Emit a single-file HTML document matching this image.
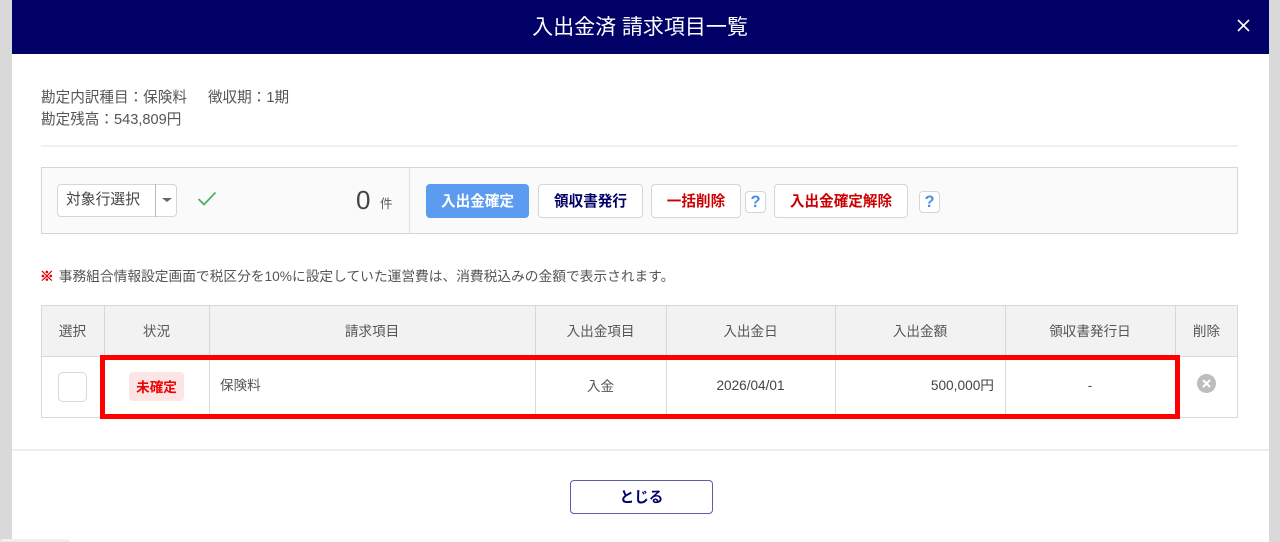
<!DOCTYPE html>
<html lang="ja"><head><meta charset="utf-8"><title>入出金済 請求項目一覧</title>
<style>
html,body{margin:0;padding:0;width:1280px;height:542px;overflow:hidden;background:#d9d9d9}
body{position:relative;font-family:"Liberation Sans","Noto Sans CJK JP",sans-serif;color:#555;font-size:14px}
.a{position:absolute;box-sizing:border-box;white-space:nowrap}
.c{display:flex;align-items:center;justify-content:center}
.btn{top:184px;height:34px;background:#fff;border:1px solid #d5d5d5;border-radius:4px;font-weight:700;font-size:14.6px}
.q{top:191px;height:22px;width:21px;background:#fff;border:1px solid #d5d5d5;border-radius:4px;color:#4a90e2;font-weight:700;font-size:16.5px}
.h{top:304px;height:51px;font-size:13.6px;color:#555}
.d{top:356px;height:58px;font-size:13.6px;color:#555}
.v{width:1px;background:#d8d8d8;top:305px;height:113px}
</style></head><body>
<div class="a" style="left:11.5px;top:0;width:1257px;height:542px;background:#fff"></div>
<div class="a c" style="left:11.5px;top:0;width:1257px;height:54px;background:#000066;color:#fff;font-size:21px;padding-bottom:2px">入出金済 請求項目一覧</div>
<svg class="a" style="left:1237px;top:19px" width="13" height="13" viewBox="0 0 13 13"><path d="M1 1L12 12M12 1L1 12" stroke="#fff" stroke-width="1.6"/></svg>

<div class="a" style="left:41px;top:87px;font-size:14.6px;line-height:22px;color:#555">勘定内訳種目：保険料<span style="margin-left:21px">徴収期：1期</span><br>勘定残高：543,809円</div>
<div class="a" style="left:41px;top:145px;width:1197px;height:2px;background:#f0f0f0"></div>

<div class="a" style="left:41px;top:167px;width:1197px;height:67px;background:#fafafa;border:1px solid #d5d5d5"></div>
<div class="a" style="left:409px;top:168px;width:1px;height:65px;background:#e2e2e2"></div>
<div class="a" style="left:57px;top:184px;width:120px;height:33px;background:#fff;border:1px solid #d5d5d5;border-radius:4px"></div>
<div class="a" style="left:155px;top:184px;width:1px;height:33px;background:#bbb"></div>
<div class="a" style="left:66px;top:185px;height:31px;line-height:31px;font-size:14.8px;color:#444">対象行選択</div>
<div class="a" style="left:162px;top:198px;width:0;height:0;border-left:5px solid transparent;border-right:5px solid transparent;border-top:4px solid #666"></div>
<svg class="a" style="left:197px;top:191px" width="20" height="16" viewBox="0 0 20 16"><path d="M1.5 8L7 13.5L18.5 1.5" fill="none" stroke="#4cae63" stroke-width="1.7"/></svg>
<div class="a" style="left:356px;top:184px;font-size:26px;line-height:32px;color:#444">0</div>
<div class="a" style="left:380px;top:195px;font-size:12.5px;line-height:18px;color:#555">件</div>

<div class="a btn c" style="left:426px;width:103px;background:#5b9bf0;border-color:#5b9bf0;color:#fff;padding-bottom:2px">入出金確定</div>
<div class="a btn c" style="left:538px;width:105px;color:#000066;padding-bottom:2px">領収書発行</div>
<div class="a btn c" style="left:651px;width:90px;color:#cc0000;padding-bottom:2px">一括削除</div>
<div class="a q c" style="left:745px">?</div>
<div class="a btn c" style="left:774px;width:134px;color:#cc0000;padding-bottom:2px">入出金確定解除</div>
<div class="a q c" style="left:919px">?</div>

<div class="a" style="left:40px;top:265px;font-size:13.72px;line-height:20px;color:#555"><span style="font-family:'Noto Sans CJK JP',sans-serif;color:#e60000;font-weight:700;-webkit-text-stroke:.6px #e60000">※</span><span style="margin-left:5px">事務組合情報設定画面で税区分を10%に設定していた運営費は、消費税込みの金額で表示されます。</span></div>

<div class="a" style="left:41px;top:305px;width:1197px;height:51px;background:#f2f2f2"></div>
<div class="a" style="left:41px;top:305px;width:1197px;height:113px;border:1px solid #d8d8d8"></div>
<div class="a" style="left:41px;top:356px;width:1197px;height:1px;background:#d8d8d8"></div>
<div class="a v" style="left:104px"></div><div class="a v" style="left:209px"></div><div class="a v" style="left:535px"></div><div class="a v" style="left:666px"></div><div class="a v" style="left:835px"></div><div class="a v" style="left:1005px"></div><div class="a v" style="left:1175px"></div>

<div class="a h c" style="left:41px;width:63px">選択</div>
<div class="a h c" style="left:104px;width:105px">状況</div>
<div class="a h c" style="left:209px;width:326px">請求項目</div>
<div class="a h c" style="left:535px;width:131px">入出金項目</div>
<div class="a h c" style="left:666px;width:169px">入出金日</div>
<div class="a h c" style="left:835px;width:170px">入出金額</div>
<div class="a h c" style="left:1005px;width:170px">領収書発行日</div>
<div class="a h c" style="left:1175px;width:63px">削除</div>

<div class="a" style="left:58px;top:372px;width:29px;height:30px;background:#fff;border:1px solid #d8d8d8;border-radius:5px"></div>
<div class="a c" style="left:129px;top:372px;width:55px;height:29px;background:#fbe5e5;border-radius:4px;color:#f00000;font-weight:700;font-size:13.6px;padding-bottom:2px">未確定</div>
<div class="a d" style="left:220px;line-height:60px">保険料</div>
<div class="a d c" style="left:535px;width:131px">入金</div>
<div class="a d c" style="left:666px;width:169px;color:#444">2026/04/01</div>
<div class="a d" style="left:836px;width:158px;text-align:right;line-height:60px;font-size:13.7px;color:#444">500,000円</div>
<div class="a d c" style="left:1005px;width:170px">-</div>
<svg class="a" style="left:1197px;top:374px" width="19" height="19" viewBox="0 0 19 19"><circle cx="9.5" cy="9.5" r="9.5" fill="#bdbdbd"/><path d="M6 6L13 13M13 6L6 13" stroke="#fff" stroke-width="2"/></svg>

<div class="a" style="left:100px;top:355px;width:1080px;height:64px;border:5px solid #ff0000"></div>

<div class="a" style="left:11.5px;top:449px;width:1257px;height:2px;background:#eeeeee"></div>
<div class="a c" style="left:570px;top:480px;width:143px;height:34px;background:#fff;border:1px solid #5a5fa8;border-radius:4px;color:#000066;font-weight:700;font-size:14.6px;padding-bottom:1px">とじる</div>
<div class="a" style="left:0;top:539px;width:70px;height:3px;background:linear-gradient(#f4f4f4,#e8e8e8);border-radius:3px 3px 0 0"></div>
</body></html>
